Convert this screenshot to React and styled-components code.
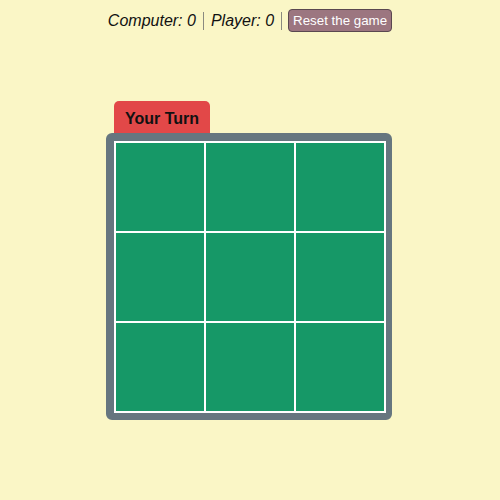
import React, { useState } from 'react';
import styled, { createGlobalStyle } from 'styled-components';

const GlobalStyle = createGlobalStyle`
  html, body {
    margin: 0;
    padding: 0;
    background: #faf6c6;
    font-family: "Liberation Sans", Arial, sans-serif;
  }
`;

const App = () => {
  const [cells] = useState(Array(9).fill(null));
  return (
    <Page>
      <GlobalStyle />
      <Scoreboard>
        <Score>Computer: 0</Score>
        <Divider />
        <Score>Player: 0</Score>
        <Divider />
        <ResetButton>Reset the game</ResetButton>
      </Scoreboard>
      <Game>
        <TurnTab>Your Turn</TurnTab>
        <Board>
          <Grid>
            {cells.map((c, i) => (
              <Cell key={i}>{c}</Cell>
            ))}
          </Grid>
        </Board>
      </Game>
    </Page>
  );
};

export default App;

const Page = styled.div`
  width: 500px;
  height: 500px;
  display: flex;
  flex-direction: column;
  align-items: center;
`;

const Scoreboard = styled.div`
  display: flex;
  align-items: center;
  gap: 7px;
  margin-top: 9px;
  height: 23px;
`;

const Score = styled.span`
  font-style: italic;
  font-size: 16px;
  color: #111;
`;

const Divider = styled.span`
  width: 1px;
  height: 18px;
  background: #8a8a80;
`;

const ResetButton = styled.button`
  font-family: "Liberation Sans", Arial, sans-serif;
  font-size: 13.33px;
  color: #fff;
  background: #9c7680;
  border: 1px solid #5a4850;
  border-radius: 4px;
  height: 23px;
  padding: 0 4px;
  margin-left: -1px;
`;

const Game = styled.div`
  margin-top: 69px;
  margin-right: 2px;
  display: flex;
  flex-direction: column;
  align-items: flex-start;
`;

const TurnTab = styled.div`
  margin-left: 8px;
  height: 32px;
  box-sizing: border-box;
  padding: 3px 11px 0;
  display: flex;
  align-items: center;
  background: #e24848;
  border-radius: 5px 5px 0 0;
  font-weight: bold;
  font-size: 16px;
  color: #111;
`;

const Board = styled.div`
  border: 7px solid #66767f;
  border-width: 8px 6px 7px 8px;
  border-radius: 6px;
  background: #66767f;
`;

const Grid = styled.div`
  display: grid;
  grid-template-columns: repeat(3, 88px);
  grid-template-rows: repeat(3, 88px);
  gap: 2px;
  padding: 2px;
  background: #fff;
`;

const Cell = styled.div`
  background: #169867;
`;
